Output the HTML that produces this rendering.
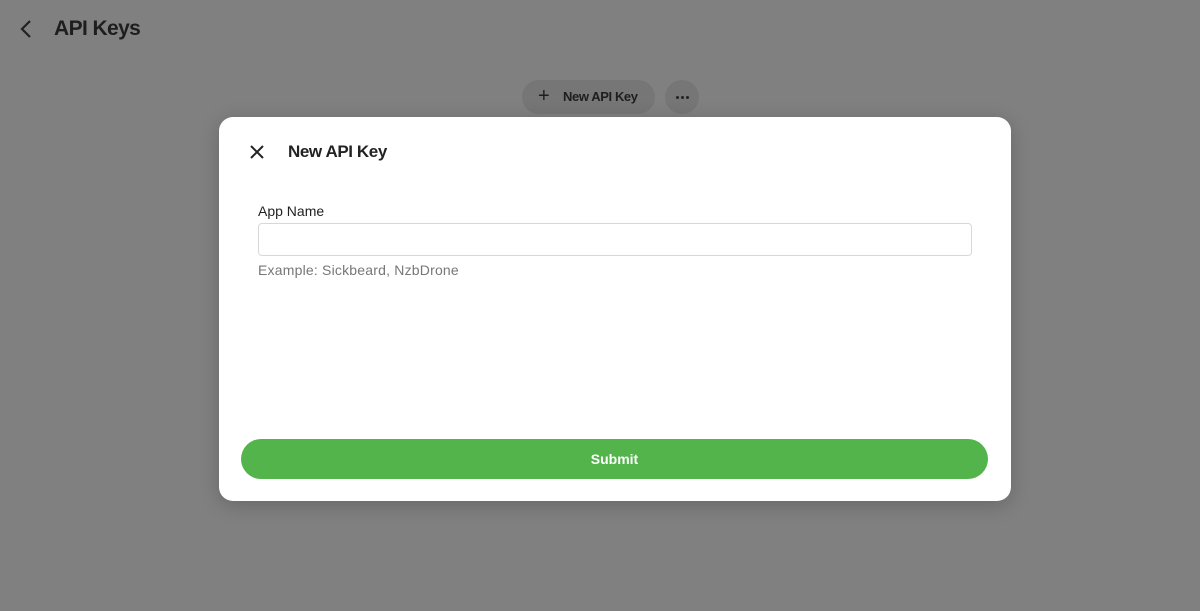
<!DOCTYPE html>
<html><head><style>
body{margin:0;width:1200px;height:611px;background:#808080;font-family:"Liberation Sans",sans-serif;position:relative;overflow:hidden}
.t{position:absolute;left:54px;top:17px;font-size:21px;font-weight:bold;color:#1e1e1e;letter-spacing:-0.6px}
.back{position:absolute;left:18px;top:18px}
.btn{position:absolute;left:522px;top:80px;width:133px;height:34px;border-radius:17px;background:#767676;font-size:13px;font-weight:bold;color:#1e1e1e;line-height:34px;letter-spacing:-0.4px}
.dots{position:absolute;left:665px;top:80px;width:34px;height:34px;border-radius:17px;background:#767676}
.dots i{position:absolute;top:16px;width:3px;height:3px;border-radius:2px;background:#222}
.m{position:absolute;left:219px;top:117px;width:792px;height:384px;background:#fff;border-radius:14px;box-shadow:0 4px 20px rgba(0,0,0,.2)}
.h{position:absolute;left:69px;top:25px;font-size:17px;font-weight:bold;color:#222;letter-spacing:-0.4px}
.lab{position:absolute;left:39px;top:86px;font-size:14px;color:#222}
.in{position:absolute;left:39px;top:106px;width:712px;height:31px;border:1px solid #d8d8d8;border-radius:4px}
.ex{position:absolute;left:39px;top:145px;font-size:14px;color:#777;letter-spacing:0.2px}
.sub{position:absolute;left:22px;top:322px;width:747px;height:40px;border-radius:20px;background:#53b44b;color:#fff;font-weight:bold;font-size:14px;text-align:center;line-height:40px}
</style></head><body>
<svg class="back" width="18" height="22" viewBox="0 0 18 22"><path d="M12 3 L4 11 L12 19" stroke="#222" stroke-width="2.2" fill="none"/></svg>
<div class="t">API Keys</div>
<div class="btn"><span style="position:absolute;left:16px;font-size:20px;top:-1px;font-weight:normal">+</span><span style="position:absolute;left:41px">New API Key</span></div>
<div class="dots"><i style="left:11px"></i><i style="left:16px"></i><i style="left:21px"></i></div>
<div class="m">
<svg style="position:absolute;left:30px;top:27px" width="16" height="16" viewBox="0 0 16 16"><path d="M2 2L14 14M14 2L2 14" stroke="#222" stroke-width="2" fill="none"/></svg>
<div class="h">New API Key</div>
<div class="lab">App Name</div>
<div class="in"></div>
<div class="ex">Example: Sickbeard, NzbDrone</div>
<div class="sub">Submit</div>
</div>
</body></html>
